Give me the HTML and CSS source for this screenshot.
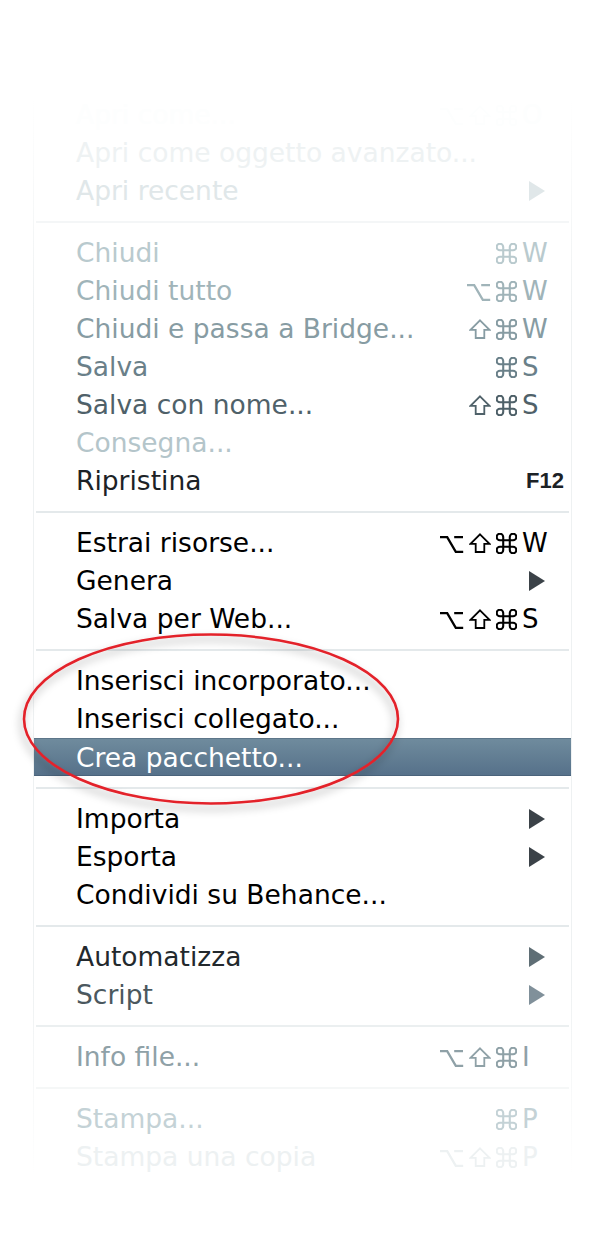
FILE: index.html
```html
<!DOCTYPE html>
<html lang="it">
<head>
<meta charset="utf-8">
<title>Menu File</title>
<link rel="stylesheet" href="styles.css">
</head>
<body>
<svg class="defs" width="0" height="0" aria-hidden="true">
  <defs>
    <symbol id="cmd" viewBox="2.4 2.4 19.2 19.2">
      <path d="M15 6v12a3 3 0 1 0 3-3H6a3 3 0 1 0 3 3V6a3 3 0 1 0-3 3h12a3 3 0 1 0-3-3" fill="none" stroke="currentColor" stroke-width="1.9"/>
    </symbol>
    <symbol id="shift" viewBox="0 0 22 20">
      <polygon points="11,1.3 20.5,10.8 15.3,10.8 15.3,19 6.7,19 6.7,10.8 1.5,10.8" fill="none" stroke="currentColor" stroke-width="1.8" stroke-linejoin="miter"/>
    </symbol>
    <symbol id="opt" viewBox="0 0 25 18">
      <path d="M1 2.2h7.2l8.6 14.6h7.4M15.2 2.2h8.8" fill="none" stroke="currentColor" stroke-width="2.3"/>
    </symbol>
    <symbol id="tri" viewBox="0 0 16 20">
      <polygon points="0,0 16,10 0,20" fill="currentColor"/>
    </symbol>
  </defs>
</svg>
<div class="page">
  <div class="menu">
    <div class="row t0"><span class="label">Apri come...</span><span class="mods"><svg class="m-opt"><use href="#opt"/></svg><svg class="m-shift"><use href="#shift"/></svg><svg class="m-cmd"><use href="#cmd"/></svg></span><span class="key">O</span></div>
    <div class="row t1"><span class="label">Apri come oggetto avanzato...</span><span class="mods"></span><span class="key"></span></div>
    <div class="row t2"><span class="label">Apri recente</span><span class="mods"></span><span class="key"><svg class="tri"><use href="#tri"/></svg></span></div>
    <div class="sep s-faint"></div>
    <div class="row t3"><span class="label">Chiudi</span><span class="mods"><svg class="m-cmd"><use href="#cmd"/></svg></span><span class="key">W</span></div>
    <div class="row t4"><span class="label">Chiudi tutto</span><span class="mods"><svg class="m-opt"><use href="#opt"/></svg><svg class="m-cmd"><use href="#cmd"/></svg></span><span class="key">W</span></div>
    <div class="row t5"><span class="label">Chiudi e passa a Bridge...</span><span class="mods"><svg class="m-shift"><use href="#shift"/></svg><svg class="m-cmd"><use href="#cmd"/></svg></span><span class="key">W</span></div>
    <div class="row t6"><span class="label">Salva</span><span class="mods"><svg class="m-cmd"><use href="#cmd"/></svg></span><span class="key">S</span></div>
    <div class="row t7"><span class="label">Salva con nome...</span><span class="mods"><svg class="m-shift"><use href="#shift"/></svg><svg class="m-cmd"><use href="#cmd"/></svg></span><span class="key">S</span></div>
    <div class="row t-dis"><span class="label">Consegna...</span><span class="mods"></span><span class="key"></span></div>
    <div class="row t8"><span class="label">Ripristina</span><span class="mods"></span><span class="key"><span class="fkey">F12</span></span></div>
    <div class="sep"></div>
    <div class="row"><span class="label">Estrai risorse...</span><span class="mods"><svg class="m-opt"><use href="#opt"/></svg><svg class="m-shift"><use href="#shift"/></svg><svg class="m-cmd"><use href="#cmd"/></svg></span><span class="key">W</span></div>
    <div class="row"><span class="label">Genera</span><span class="mods"></span><span class="key"><svg class="tri"><use href="#tri"/></svg></span></div>
    <div class="row"><span class="label">Salva per Web...</span><span class="mods"><svg class="m-opt"><use href="#opt"/></svg><svg class="m-shift"><use href="#shift"/></svg><svg class="m-cmd"><use href="#cmd"/></svg></span><span class="key">S</span></div>
    <div class="sep"></div>
    <div class="row"><span class="label">Inserisci incorporato...</span><span class="mods"></span><span class="key"></span></div>
    <div class="row"><span class="label">Inserisci collegato...</span><span class="mods"></span><span class="key"></span></div>
    <div class="row active"><span class="label">Crea pacchetto...</span><span class="mods"></span><span class="key"></span></div>
    <div class="sep"></div>
    <div class="row"><span class="label">Importa</span><span class="mods"></span><span class="key"><svg class="tri"><use href="#tri"/></svg></span></div>
    <div class="row"><span class="label">Esporta</span><span class="mods"></span><span class="key"><svg class="tri"><use href="#tri"/></svg></span></div>
    <div class="row"><span class="label">Condividi su Behance...</span><span class="mods"></span><span class="key"></span></div>
    <div class="sep"></div>
    <div class="row b1"><span class="label">Automatizza</span><span class="mods"></span><span class="key"><svg class="tri"><use href="#tri"/></svg></span></div>
    <div class="row b2"><span class="label">Script</span><span class="mods"></span><span class="key"><svg class="tri"><use href="#tri"/></svg></span></div>
    <div class="sep s-b1"></div>
    <div class="row b3"><span class="label">Info file...</span><span class="mods"><svg class="m-opt"><use href="#opt"/></svg><svg class="m-shift"><use href="#shift"/></svg><svg class="m-cmd"><use href="#cmd"/></svg></span><span class="key">I</span></div>
    <div class="sep s-b2"></div>
    <div class="row b4"><span class="label">Stampa...</span><span class="mods"><svg class="m-cmd"><use href="#cmd"/></svg></span><span class="key">P</span></div>
    <div class="row b5"><span class="label">Stampa una copia</span><span class="mods"><svg class="m-opt"><use href="#opt"/></svg><svg class="m-shift"><use href="#shift"/></svg><svg class="m-cmd"><use href="#cmd"/></svg></span><span class="key">P</span></div>
  </div>
  <svg class="circle" viewBox="0 0 606 1240" width="606" height="1240">
    <defs>
      <filter id="sh" x="-20%" y="-30%" width="140%" height="160%">
        <feDropShadow dx="-2" dy="5" stdDeviation="4" flood-color="#000" flood-opacity="0.35"/>
      </filter>
    </defs>
    <ellipse cx="211" cy="719" rx="187" ry="84.5" fill="none" stroke="#e3222a" stroke-width="2.6" filter="url(#sh)"/>
  </svg>
</div>
</body>
</html>
```

FILE: styles.css
```css
html, body {
  margin: 0;
  padding: 0;
  background: #ffffff;
}

.defs {
  position: absolute;
  width: 0;
  height: 0;
}

.page {
  position: relative;
  width: 606px;
  height: 1240px;
  overflow: hidden;
}

.menu {
  margin: 96px 0 0 33px;
  width: 537px;
  border-left: 1px solid #f0f3f4;
  border-right: 1px solid #f0f3f4;
  border-image: linear-gradient(rgba(240,243,244,0), #eef1f2 20%, #eef1f2 82%, rgba(240,243,244,0)) 1;
  font-family: "DejaVu Sans", sans-serif;
  font-size: 26.5px;
  color: #000;
}

.row {
  display: grid;
  grid-template-columns: 1fr auto 54px;
  align-items: center;
  height: 38px;
  line-height: 38px;
  padding-left: 42px;
  white-space: nowrap;
}

.mods {
  display: flex;
  align-items: center;
  gap: 5px;
  height: 38px;
}

.m-cmd {
  width: 21px;
  height: 21px;
  margin-top: 1px;
}

.m-shift {
  width: 22px;
  height: 20px;
}

.m-opt {
  width: 25px;
  height: 18px;
  margin-top: 1px;
}

.key {
  padding-left: 5px;
  display: flex;
  align-items: center;
  height: 38px;
  font-size: 26px;
}

.fkey {
  margin-left: 4px;
  font-family: "Liberation Sans", sans-serif;
  font-weight: bold;
  font-size: 22px;
}

.tri {
  width: 16px;
  height: 20px;
  margin-left: 7px;
  color: #3b4248;
}

.sep {
  height: 24px;
  display: flex;
  align-items: center;
  padding: 0 2px;
}

.sep::before {
  content: "";
  display: block;
  width: 100%;
  height: 2px;
  background: #e4e9eb;
}

.s-faint::before { background: #f4f6f7; }
.s-b1::before { background: #ebeff0; }
.s-b2::before { background: #f5f7f7; }

.active {
  color: #fff;
  background: linear-gradient(#6f8b9d, #56718a);
  border-top: 1px solid #5d7689;
  border-bottom: 1px solid #4a637b;
  height: 36px;
  line-height: 36px;
}

.t0 { color: #fdfefe; }
.t1 { color: #eef2f3; }
.t2 { color: #e0e7e9; }
.t2 .tri { color: #e0e7e9; }
.t3 { color: #b9cace; }
.t4 { color: #a0b4b9; }
.t5 { color: #879ca3; }
.t6 { color: #6a8089; }
.t7 { color: #4f6169; }
.t-dis { color: #b4c5ca; }
.t8 { color: #1c2226; }

.b1 { color: #23292d; }
.b1 .tri { color: #5f6e75; }
.b2 { color: #4b585e; }
.b2 .tri { color: #80909a; }
.b3 { color: #8fa1a7; }
.b4 { color: #c4d2d6; }
.b5 { color: #edf1f2; }

.circle {
  position: absolute;
  left: 0;
  top: 0;
  pointer-events: none;
}
```
